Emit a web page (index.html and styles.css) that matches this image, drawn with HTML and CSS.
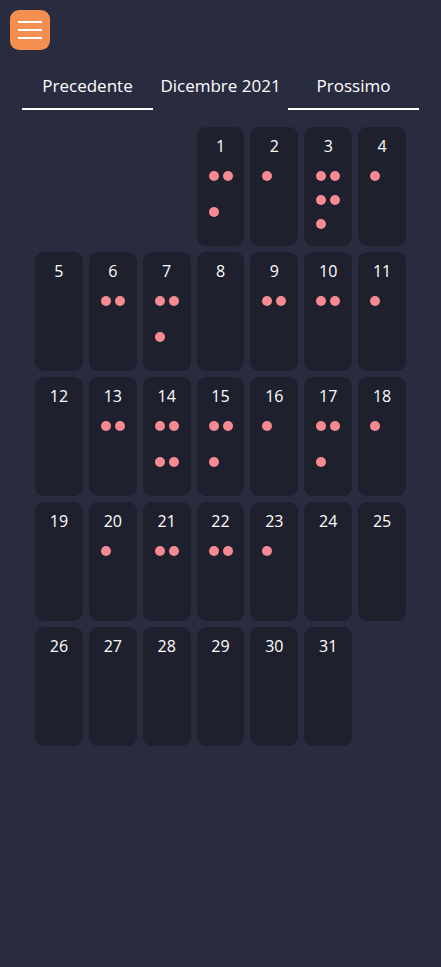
FILE: index.html
```html
<!DOCTYPE html>
<html lang="it">
<head>
<meta charset="utf-8">
<title>Calendario</title>
<link rel="stylesheet" href="styles.css">
</head>
<body>
<header class="top">
  <button class="menu" aria-label="Menu">
    <svg width="24" height="18" viewBox="0 0 24 18"><g stroke="#fff" stroke-width="2"><line x1="0" y1="1" x2="24" y2="1"/><line x1="0" y1="9" x2="24" y2="9"/><line x1="0" y1="17" x2="24" y2="17"/></g></svg>
  </button>
</header>
<nav class="month-nav">
  <button class="nav-btn">Precedente</button>
  <div class="month-title">Dicembre 2021</div>
  <button class="nav-btn">Prossimo</button>
</nav>
<main class="grid">
  <div class="cell empty"></div>
  <div class="cell empty"></div>
  <div class="cell empty"></div>
  <div class="cell"><span class="num">1</span><div class="dots"><i></i><i></i><i></i></div></div>
  <div class="cell"><span class="num">2</span><div class="dots"><i></i></div></div>
  <div class="cell"><span class="num">3</span><div class="dots"><i></i><i></i><i></i><i></i><i></i></div></div>
  <div class="cell"><span class="num">4</span><div class="dots"><i></i></div></div>

  <div class="cell"><span class="num">5</span><div class="dots"></div></div>
  <div class="cell"><span class="num">6</span><div class="dots"><i></i><i></i></div></div>
  <div class="cell"><span class="num">7</span><div class="dots"><i></i><i></i><i></i></div></div>
  <div class="cell"><span class="num">8</span><div class="dots"></div></div>
  <div class="cell"><span class="num">9</span><div class="dots"><i></i><i></i></div></div>
  <div class="cell"><span class="num">10</span><div class="dots"><i></i><i></i></div></div>
  <div class="cell"><span class="num">11</span><div class="dots"><i></i></div></div>

  <div class="cell"><span class="num">12</span><div class="dots"></div></div>
  <div class="cell"><span class="num">13</span><div class="dots"><i></i><i></i></div></div>
  <div class="cell"><span class="num">14</span><div class="dots"><i></i><i></i><i></i><i></i></div></div>
  <div class="cell"><span class="num">15</span><div class="dots"><i></i><i></i><i></i></div></div>
  <div class="cell"><span class="num">16</span><div class="dots"><i></i></div></div>
  <div class="cell"><span class="num">17</span><div class="dots"><i></i><i></i><i></i></div></div>
  <div class="cell"><span class="num">18</span><div class="dots"><i></i></div></div>

  <div class="cell"><span class="num">19</span><div class="dots"></div></div>
  <div class="cell"><span class="num">20</span><div class="dots"><i></i></div></div>
  <div class="cell"><span class="num">21</span><div class="dots"><i></i><i></i></div></div>
  <div class="cell"><span class="num">22</span><div class="dots"><i></i><i></i></div></div>
  <div class="cell"><span class="num">23</span><div class="dots"><i></i></div></div>
  <div class="cell"><span class="num">24</span><div class="dots"></div></div>
  <div class="cell"><span class="num">25</span><div class="dots"></div></div>

  <div class="cell"><span class="num">26</span><div class="dots"></div></div>
  <div class="cell"><span class="num">27</span><div class="dots"></div></div>
  <div class="cell"><span class="num">28</span><div class="dots"></div></div>
  <div class="cell"><span class="num">29</span><div class="dots"></div></div>
  <div class="cell"><span class="num">30</span><div class="dots"></div></div>
  <div class="cell"><span class="num">31</span><div class="dots"></div></div>
</main>
</body>
</html>
```
FILE: styles.css
```css
html, body {
  margin: 0;
  padding: 0;
}
body {
  background: #292c3f;
  color: #ffffff;
  font-family: "Open Sans", "Noto Sans", sans-serif;
  min-height: 967px;
}
.top {
  padding: 10px 10px 0;
  height: 40px;
}
.menu {
  width: 40px;
  height: 40px;
  border: none;
  border-radius: 9px;
  background: #f48f50;
  padding: 0;
  display: flex;
  align-items: center;
  justify-content: center;
  cursor: pointer;
}
.menu svg {
  display: block;
}
.month-nav {
  display: flex;
  align-items: stretch;
  margin: 12px 22px 0;
  height: 48px;
}
.nav-btn {
  flex: 0 0 131px;
  background: none;
  border: none;
  border-bottom: 2px solid #ffffff;
  color: #ffffff;
  font-family: inherit;
  font-size: 17px;
  line-height: 23px;
  padding: 0;
  cursor: pointer;
}
.month-title {
  flex: 1;
  text-align: center;
  font-size: 17px;
  line-height: 23px;
  padding-top: 12px;
  box-sizing: border-box;
}
.grid {
  display: grid;
  grid-template-columns: repeat(7, 1fr);
  grid-auto-rows: 119px;
  gap: 6px;
  margin: 17px 35px 0;
}
.cell {
  background: #1f202e;
  border-radius: 9px;
  display: flex;
  flex-direction: column;
  padding: 9px 11px 3px 12px;
  box-sizing: border-box;
}
.cell.empty {
  background: transparent;
}
.num {
  display: block;
  text-align: center;
  font-size: 16px;
  line-height: 20px;
  height: 20px;
  margin-left: -1px;
}
.dots {
  flex: 1;
  margin-top: 15px;
  display: flex;
  flex-wrap: wrap;
  align-content: stretch;
  align-items: flex-start;
  column-gap: 4px;
}
.dots i {
  display: block;
  width: 10px;
  height: 10px;
  border-radius: 50%;
  background: #f58a92;
}
```
